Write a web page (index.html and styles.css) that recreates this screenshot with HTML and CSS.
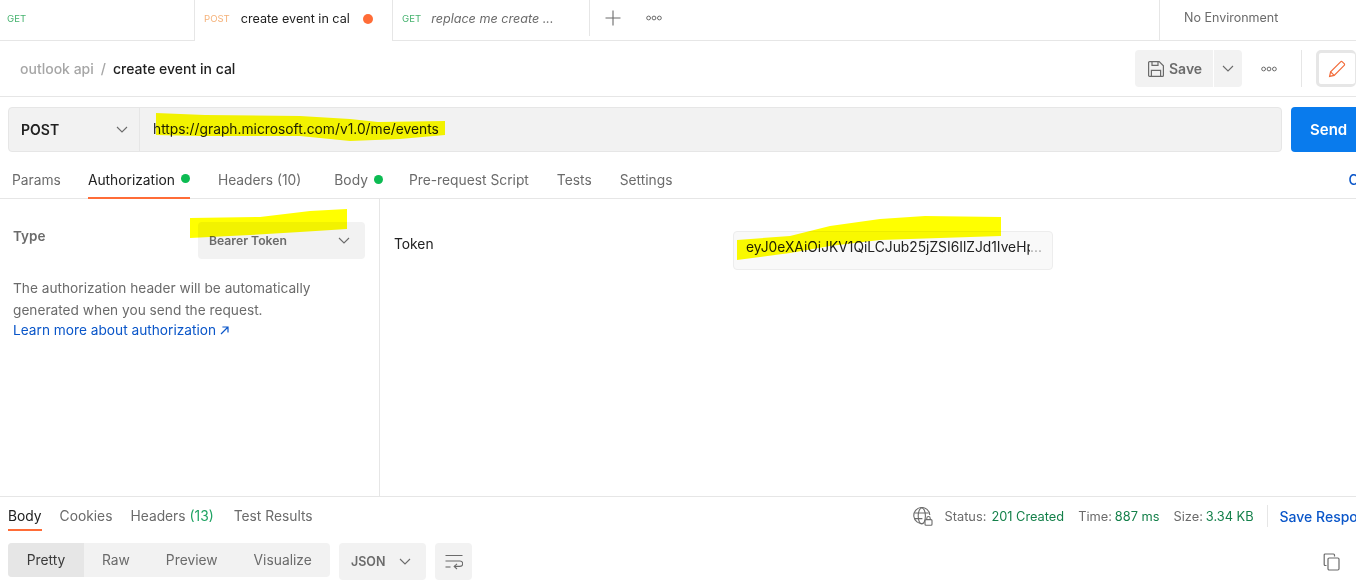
FILE: index.html
```html
<!DOCTYPE html>
<html lang="en">
<head>
<meta charset="utf-8">
<title>create event in cal</title>
<link rel="stylesheet" href="styles.css">
</head>
<body>
<div class="app">
  <header class="tabbar">
    <div class="tab tab-first"><span class="verb get">GET</span></div>
    <div class="tab tab-active"><span class="verb post">POST</span><span class="tab-name">create event in cal</span><span class="dirty"></span></div>
    <div class="tab tab-third"><span class="verb get">GET</span><span class="tab-name italic">replace me create ...</span></div>
    <div class="tab-actions">
      <svg class="icon-plus" width="16" height="16" viewBox="0 0 16 16"><path d="M8 0.5v15M0.5 8h15" stroke="#6b6b6b" stroke-width="1.1" fill="none"/></svg>
      <svg class="dots" width="16" height="6" viewBox="0 0 16 6"><g fill="none" stroke="#6b6b6b" stroke-width="1"><circle cx="2.6" cy="3" r="1.9"/><circle cx="8" cy="3" r="1.9"/><circle cx="13.4" cy="3" r="1.9"/></g></svg>
    </div>
    <div class="env">No Environment</div>
  </header>

  <section class="titlebar">
    <div class="crumbs"><span class="crumb-parent">outlook api</span><span class="crumb-sep">/</span><span class="crumb-current">create event in cal</span></div>
    <div class="title-actions">
      <button class="btn-save">
        <svg width="18" height="18" viewBox="0 0 18 18"><g fill="none" stroke="#6b6b6b" stroke-width="1.2"><path d="M1.6 2.6a1 1 0 0 1 1-1h9.6l4.2 4.2v9.6a1 1 0 0 1-1 1H2.6a1 1 0 0 1-1-1z"/><path d="M5 1.8v3.6h6V1.8"/><path d="M4.4 16.2V10.4h9.2v5.8"/></g></svg>
        <span>Save</span>
      </button>
      <button class="btn-caret"><svg class="chev" width="12" height="7" viewBox="0 0 12 7"><path d="M1 1l5 5 5-5" fill="none" stroke="#6b6b6b" stroke-width="1.1"/></svg></button>
      <svg class="dots title-dots" width="16" height="6" viewBox="0 0 16 6"><g fill="none" stroke="#6b6b6b" stroke-width="1"><circle cx="2.6" cy="3" r="1.9"/><circle cx="8" cy="3" r="1.9"/><circle cx="13.4" cy="3" r="1.9"/></g></svg>
      <span class="vdivider"></span>
      <div class="mode-box"><svg width="18" height="18" viewBox="0 0 18 18"><g fill="none" stroke="#f26b3a" stroke-width="1.2"><path d="M1.6 16.4l1-4.6L12.6 1.8a1.2 1.2 0 0 1 1.7 0l1.9 1.9a1.2 1.2 0 0 1 0 1.7L6.2 15.4z"/><path d="M2.6 11.8l3.6 3.6"/></g></svg></div>
    </div>
  </section>

  <section class="urlrow">
    <div class="urlbox">
      <div class="method"><span>POST</span><svg class="chev" width="12" height="7" viewBox="0 0 12 7"><path d="M1 1l5 5 5-5" fill="none" stroke="#6b6b6b" stroke-width="1.1"/></svg></div>
      <div class="url">https://graph.microsoft.com/v1.0/me/events</div>
    </div>
    <button class="send">Send</button>
  </section>

  <nav class="reqtabs">
    <span class="rt rt-params">Params</span>
    <span class="rt rt-active">Authorization<i class="gdot"></i></span>
    <span class="rt rt-headers">Headers <span class="count">(10)</span></span>
    <span class="rt rt-body">Body<i class="gdot"></i></span>
    <span class="rt">Pre-request Script</span>
    <span class="rt">Tests</span>
    <span class="rt">Settings</span>
    <span class="cookies">Cookies</span>
  </nav>

  <main class="authpane">
    <div class="auth-left">
      <div class="type-row">
        <span class="type-label">Type</span>
        <div class="type-select"><span>Bearer Token</span><svg class="chev" width="12" height="7" viewBox="0 0 12 7"><path d="M1 1l5 5 5-5" fill="none" stroke="#6b6b6b" stroke-width="1.1"/></svg></div>
      </div>
      <p class="auth-help">The authorization header will be automatically generated when you send the request.</p>
      <a class="auth-link">Learn more about authorization <svg width="9" height="9" viewBox="0 0 9 9"><path d="M1 8L8 1M2.4 1H8v5.6" fill="none" stroke="#0a56c9" stroke-width="1.2"/></svg></a>
    </div>
    <div class="auth-right">
      <span class="token-label">Token</span>
      <div class="token-input"><span class="token-text">eyJ0eXAiOiJKV1QiLCJub25jZSI6IlZJd1IveHpxY2</span><span class="token-more">...</span></div>
    </div>
  </main>

  <section class="resphead">
    <nav class="resptabs">
      <span class="pt pt-active">Body</span>
      <span class="pt">Cookies</span>
      <span class="pt pt-headers">Headers <span class="count">(13)</span></span>
      <span class="pt">Test Results</span>
    </nav>
    <div class="respmeta">
      <svg class="globe" width="20" height="19" viewBox="0 0 20 19"><g fill="none" stroke="#6b6b6b" stroke-width="1.1"><path d="M10 16.4A8 8 0 1 1 16.8 8"/><ellipse cx="8.8" cy="9" rx="3.6" ry="8"/><path d="M1.6 6h14M1.4 11.6h8"/><rect x="12" y="12.6" width="7" height="5.6" rx="1"/><path d="M13.8 12.6v-1.4a1.7 1.7 0 0 1 3.4 0v1.4"/></g></svg>
      <span class="meta"><span class="meta-k">Status:</span><span class="meta-v">201 Created</span></span>
      <span class="meta meta-tight"><span class="meta-k">Time:</span><span class="meta-v">887 ms</span></span>
      <span class="meta meta-tight meta-last"><span class="meta-k">Size:</span><span class="meta-v">3.34 KB</span></span>
      <span class="vdivider meta-div"></span>
      <span class="save-resp">Save Response</span>
    </div>
  </section>

  <section class="resptools">
    <div class="segmented">
      <span class="seg seg-active">Pretty</span>
      <span class="seg seg-raw">Raw</span>
      <span class="seg seg-preview">Preview</span>
      <span class="seg seg-vis">Visualize</span>
    </div>
    <div class="format"><span>JSON</span><svg class="chev" width="12" height="7" viewBox="0 0 12 7"><path d="M1 1l5 5 5-5" fill="none" stroke="#6b6b6b" stroke-width="1.1"/></svg></div>
    <div class="wrapbtn"><svg width="18" height="16" viewBox="0 0 18 16"><g fill="none" stroke="#6b6b6b" stroke-width="1.1"><path d="M0.5 1.5h17M0.5 7h14.5a2.6 2.6 0 0 1 0 5.4H9.5"/><path d="M0.5 13h5"/><path d="M12 9.8l-2.8 2.6 2.8 2.6"/></g></svg></div>
    <svg class="copy" width="17" height="18" viewBox="0 0 17 18"><g fill="none" stroke="#6b6b6b" stroke-width="1.2"><path d="M3.5 12.5H2.2a1 1 0 0 1-1-1V2a1 1 0 0 1 1-1h8.3a1 1 0 0 1 1 1v1.5"/><rect x="5" y="5" width="11" height="12" rx="1.2"/></g></svg>
  </section>

  <svg class="marker" width="1356" height="583" viewBox="0 0 1356 583">
    <path fill="#ffff00" d="M156 113L205 115L300 116L350 119L378 122L445 121L445 135L400 139L350 141L300 136L200 136L156 135Z"/>
    <path fill="#ffff00" d="M190 218L260 217L310 211L347 209L347 229L300 232L250 235L190 238Z"/>
    <path fill="#ffff00" d="M737 240L790 236L830 226L880 219L925 216L1001 217L1001 236L940 238L880 240L830 246L790 253L737 260Z"/>
  </svg>
</div>
</body>
</html>
```
FILE: styles.css
```css
* { box-sizing: border-box; }
html, body { margin: 0; padding: 0; background: #fff; }
body { font-family: Inter, "Noto Sans", sans-serif; font-size: 14px; color: #6b6b6b; }
.app { position: relative; width: 1356px; height: 583px; overflow: hidden; display: flex; flex-direction: column; }
button { font: inherit; border: 0; padding: 0; }

.tabbar { display: flex; height: 41px; flex: none; border-bottom: 1px solid #e6e6e6; }
.tab { display: flex; align-items: center; height: 40px; font-size: 12.6px; color: #212121; }
.tab-first { width: 195px; padding: 0 0 4px 7px; border-right: 1px solid #e6e6e6; }
.tab-active { width: 198px; padding: 0 0 4px 9px; border-right: 1px solid #e6e6e6; height: 41px; background: #fff; }
.tab-third { width: 196px; padding: 0 0 4px 9px; }
.verb { font-size: 9.6px; margin-right: 10px; }
.tab-active .verb { margin-right: 11px; }
.get { color: #46b36f; }
.post { color: #f5b27a; }
.tab-name { white-space: nowrap; }
.italic { font-style: italic; color: #6b6b6b; }
.dirty { width: 10px; height: 10px; border-radius: 50%; background: #ff6c37; margin-left: 13px; }
.tab-actions { display: flex; align-items: center; width: 570px; height: 36px; border-left: 1px solid #e6e6e6; padding: 0 0 0 15px; }
.icon-plus { margin-right: 25px; }
.env { flex: 1; border-left: 1px solid #e6e6e6; padding: 0 0 6px 24px; font-size: 12.5px; display: flex; align-items: center; }

.titlebar { display: flex; align-items: center; justify-content: space-between; height: 56px; flex: none; border-bottom: 1px solid #e6e6e6; padding: 0 0 0 20px; }
.crumbs { display: flex; align-items: center; font-weight: 500; font-size: 14px; }
.crumb-parent { color: #a6a6a6; }
.crumb-sep { color: #a6a6a6; margin: 0 7px; }
.crumb-current { color: #212121; }
.title-actions { display: flex; align-items: center; }
.btn-save { display: flex; align-items: center; gap: 4px; width: 78px; height: 37px; padding-left: 12px; background: #f2f2f2; border-radius: 4px 0 0 4px; color: #6b6b6b; font-weight: 600; font-size: 14px; }
.btn-caret { display: flex; align-items: center; justify-content: center; width: 28px; height: 37px; margin-left: 1px; background: #f2f2f2; border-radius: 0 4px 4px 0; }
.title-dots { margin-left: 19px; }
.vdivider { display: block; width: 1px; background: #e6e6e6; }
.title-actions .vdivider { height: 37px; margin-left: 24px; }
.mode-box { display: flex; align-items: center; justify-content: center; width: 40px; height: 37px; margin-left: 14px; border: 3px solid #e6e6e6; border-right-width: 1px; border-radius: 5px; background: #fff; }

.urlrow { display: flex; height: 45px; flex: none; margin: 10px 0 0 8px; }
.urlbox { display: flex; width: 1274px; flex: none; background: #f2f2f2; border: 1px solid #e6e6e6; border-radius: 4px; }
.method { display: flex; align-items: center; justify-content: space-between; width: 131px; padding: 0 11px 0 12px; border-right: 1px solid #e6e6e6; color: #212121; font-weight: 600; font-size: 14px; }
.url { display: flex; align-items: center; padding: 0 0 2px 13px; color: #212121; font-size: 13.8px; }
.send { flex: none; width: 80px; height: 45px; margin-left: 9px; background: #097bed; color: #fff; font-weight: 600; font-size: 15px; border-radius: 4px 0 0 4px; text-align: left; padding-left: 19px; }

.reqtabs { display: flex; height: 47px; flex: none; padding-left: 12px; border-bottom: 1px solid #e6e6e6; align-items: center; font-size: 13.8px; }
.rt { display: flex; align-items: center; height: 36px; margin-top: 11px; padding-bottom: 1px; margin-right: 28px; white-space: pre; }
.rt-params { margin-right: 27px; }
.rt-active { color: #212121; border-bottom: 2px solid #ff6c37; padding-bottom: 0; margin-right: 28px; }
.rt-headers { margin-right: 33px; }
.rt-body { margin-right: 26px; }
.count { color: #1fa363; }
.reqtabs .count { color: #6b6b6b; }
.gdot { display: block; width: 9px; height: 9px; border-radius: 50%; background: #0cbb52; margin: -2px 0 0 6px; }
.cookies { margin-left: auto; margin-right: -46px; margin-top: 11px; padding-bottom: 1px; color: #0a56c9; font-weight: 500; }

.authpane { display: flex; height: 298px; flex: none; border-bottom: 1px solid #e6e6e6; }
.auth-left { width: 380px; flex: none; border-right: 1px solid #e6e6e6; padding: 23px 14px 0 13px; }
.type-row { display: flex; justify-content: space-between; height: 37px; }
.type-label { font-weight: 600; font-size: 13.5px; margin-top: 6px; }
.type-select { display: flex; align-items: center; justify-content: space-between; width: 167px; height: 37px; padding: 0 15px 0 11px; background: #f2f2f2; border-radius: 4px; font-weight: 600; font-size: 12.2px; }
.auth-help { margin: 19px 0 0; width: 320px; font-size: 13.7px; line-height: 21.5px; }
.auth-link { display: block; margin-top: -1px; color: #0a56c9; font-size: 13.7px; line-height: 20px; }
.auth-right { display: flex; flex: 1; padding: 32px 0 0 14px; }
.token-label { width: 339px; flex: none; color: #212121; font-size: 13.8px; margin-top: 5px; }
.token-input { display: flex; width: 320px; height: 39px; padding: 0 10px 7px 12px; align-items: center; background: #f9f9f9; border: 1px solid #ededed; border-radius: 4px; font-size: 13.8px; color: #212121; }
.token-text { width: 284px; overflow: hidden; white-space: nowrap; flex: none; }
.token-more { color: #a6a6a6; }

.resphead { display: flex; justify-content: space-between; height: 38px; flex: none; padding-left: 8px; }
.resptabs { display: flex; gap: 18px; font-size: 13.8px; }
.pt { display: flex; align-items: center; white-space: pre; height: 38px; }
.pt-headers { margin-right: 2px; }
.pt-active { color: #212121; border-bottom: 2px solid #ff6c37; height: 34px; padding-top: 5px; }
.respmeta { display: flex; align-items: center; margin-right: -26px; font-size: 12.8px; }
.globe { margin-right: 12px; }
.meta { margin-right: 14px; white-space: pre; }
.meta-k { margin-right: 5px; }
.meta-tight .meta-k { margin-right: 3px; }
.meta-last { margin-right: 13px; }
.meta-v { color: #14804a; }
.meta-div { height: 22px; margin: 0 12px 0 0; }
.save-resp { color: #0a56c9; font-weight: 500; font-size: 14px; white-space: nowrap; }

.resptools { display: flex; align-items: flex-start; flex: 1; padding: 8px 0 0 8px; position: relative; }
.segmented { display: flex; width: 322px; height: 34px; background: #f2f2f2; border-radius: 4px; overflow: hidden; }
.seg { display: flex; align-items: center; font-size: 13.8px; }
.seg-active { width: 76px; justify-content: center; background: #e6e6e6; color: #3a3a3a; }
.seg-raw { margin-left: 18px; }
.seg-preview { margin-left: 36px; }
.seg-vis { margin-left: 36px; }
.format { display: flex; align-items: center; justify-content: space-between; width: 87px; height: 37px; margin-left: 9px; padding: 0 15px 0 12px; background: #f2f2f2; border-radius: 4px; font-weight: 600; font-size: 12.5px; }
.wrapbtn { display: flex; align-items: center; justify-content: center; width: 37px; height: 37px; margin-left: 9px; background: #f2f2f2; border-radius: 4px; }
.copy { margin-left: auto; margin-right: 16px; margin-top: 10px; }

.marker { position: absolute; left: 0; top: 0; mix-blend-mode: multiply; pointer-events: none; }
```
